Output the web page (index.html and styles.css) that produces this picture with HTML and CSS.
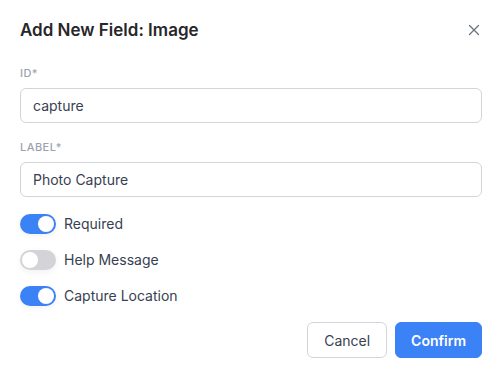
FILE: index.html
```html
<!doctype html>
<html lang="en">
  <head>
    <meta charset="UTF-8" />
    <meta name="viewport" content="width=device-width, initial-scale=1.0" />
    <title>Add New Field</title>
    <link rel="stylesheet" href="styles.css">
  </head>
  <body>
    <div class="dialog">
      <div class="dialog-header">
        <h1 class="dialog-title">Add New Field: Image</h1>
        <button class="close-button" aria-label="Close">
          <svg width="12" height="12" viewBox="0 0 12 12">
            <path d="M1.5 1.5 L10.5 10.5 M10.5 1.5 L1.5 10.5" stroke="currentColor" stroke-width="1.3" stroke-linecap="round" fill="none" />
          </svg>
        </button>
      </div>

      <div class="fields">
        <div class="field">
          <label class="field-label" for="field-id">ID*</label>
          <input class="field-input" id="field-id" type="text" value="capture" />
        </div>

        <div class="field">
          <label class="field-label" for="field-label">Label*</label>
          <input class="field-input" id="field-label" type="text" value="Photo Capture" />
        </div>
      </div>

      <div class="toggles">
        <label class="toggle-row">
          <span class="toggle on"><span class="knob"></span></span>
          <span class="toggle-text">Required</span>
        </label>
        <label class="toggle-row">
          <span class="toggle"><span class="knob"></span></span>
          <span class="toggle-text">Help Message</span>
        </label>
        <label class="toggle-row">
          <span class="toggle on"><span class="knob"></span></span>
          <span class="toggle-text">Capture Location</span>
        </label>
      </div>

      <div class="dialog-actions">
        <button class="btn btn-secondary">Cancel</button>
        <button class="btn btn-primary">Confirm</button>
      </div>
    </div>
  </body>
</html>
```

FILE: styles.css
```css
body {
  margin: 0;
  background: white;
  font-family: Inter, "Noto Sans", Arial, sans-serif;
  color: #374151;
}
.dialog {
  padding: 19px 20px 20px;
}
.dialog-header {
  display: flex;
  align-items: center;
  justify-content: space-between;
}
.dialog-title {
  margin: 0;
  font-size: 17px;
  line-height: 22px;
  font-weight: 600;
  color: #27272a;
}
.close-button {
  background: none;
  border: none;
  padding: 0;
  margin-right: 2px;
  width: 12px;
  height: 12px;
  color: #6b7280;
  cursor: pointer;
  display: flex;
}
.fields {
  margin-top: 24px;
  display: flex;
  flex-direction: column;
  gap: 16px;
}
.field {
  display: flex;
  flex-direction: column;
}
.field-label {
  font-size: 11px;
  line-height: 16px;
  font-weight: 500;
  letter-spacing: 0.04em;
  text-transform: uppercase;
  color: #9ca3af;
  margin-bottom: 7px;
}
.field-input {
  font-family: inherit;
  font-size: 14px;
  line-height: 17px;
  height: 35px;
  box-sizing: border-box;
  padding: 8px 12px;
  border: 1px solid #d1d5db;
  border-radius: 6px;
  color: #374151;
  outline: none;
}
.toggles {
  margin-top: 17px;
  display: flex;
  flex-direction: column;
  gap: 16px;
}
.toggle-row {
  display: flex;
  align-items: center;
  gap: 8px;
  font-size: 14px;
  line-height: 20px;
  color: #374151;
}
.toggle {
  width: 36px;
  height: 20px;
  border-radius: 10px;
  background: #d4d4d8;
  box-shadow: 0 2px 6px rgba(0, 0, 0, 0.06);
  display: flex;
  align-items: center;
  padding: 2px;
  box-sizing: border-box;
}
.toggle.on {
  background: #3b82f6;
  justify-content: flex-end;
}
.knob {
  width: 16px;
  height: 16px;
  border-radius: 50%;
  background: white;
}
.dialog-actions {
  margin-top: 16px;
  display: flex;
  justify-content: flex-end;
  gap: 8px;
}
.btn {
  font-family: inherit;
  font-size: 14px;
  height: 36px;
  border-radius: 6px;
  cursor: pointer;
}
.btn-secondary {
  padding: 0 16px;
  background: white;
  border: 1px solid #d1d5db;
  color: #374151;
}
.btn-primary {
  padding: 0 15px;
  background: #3b82f6;
  border: 1px solid #3b82f6;
  color: white;
  font-weight: 600;
}
```
